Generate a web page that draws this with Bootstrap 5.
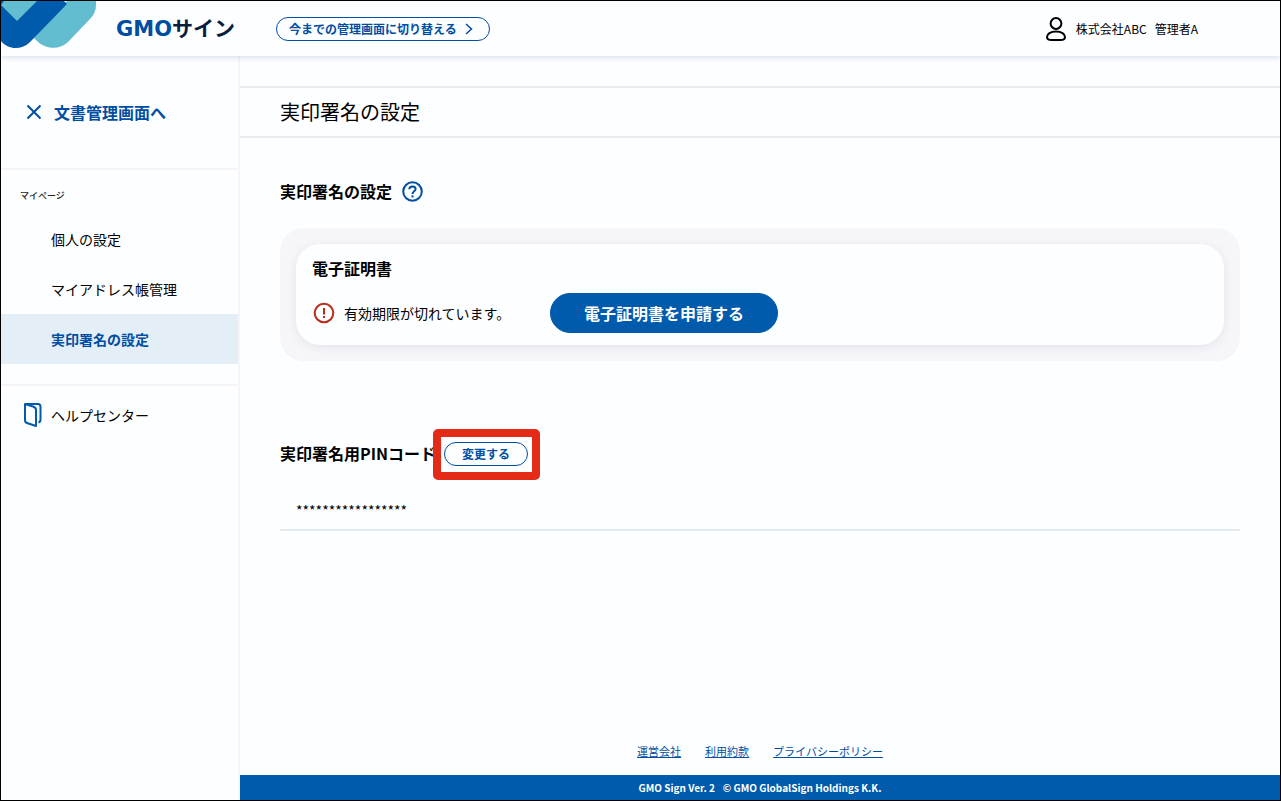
<!DOCTYPE html>
<html lang="ja">
<head>
<meta charset="utf-8">
<meta name="viewport" content="width=device-width, initial-scale=1">
<title>実印署名の設定</title>
<link href="https://cdn.jsdelivr.net/npm/bootstrap@5.3.0/dist/css/bootstrap.min.css" rel="stylesheet">
<style>
:root { --brand: #005bac; --link: #004ea2; --line: #ebebef; --line-soft: #f5f5f8; }
body { font-family: "Noto Sans CJK JP", sans-serif; font-size: 14px; line-height: 20px; color: #000; background: #fdfeff; border: 1px solid #000; }
a { color: var(--link); }
.topbar { height: 55px; background: #fdfeff; box-shadow: 0 1px 6px rgba(0, 60, 120, .18); z-index: 2; }
.brand-mark { width: 96px; height: 48px; }
.brand-name { margin-left: 19px; width: 122px; font-size: 21px; line-height: 24px; font-weight: 700; font-family: "DejaVu Sans", "Noto Sans CJK JP", sans-serif; color: #0b1c3f; }
.brand-name b { color: var(--link); }
.btn-line { --bs-btn-color: var(--link); --bs-btn-border-color: var(--link); --bs-btn-bg: #fdfeff; --bs-btn-hover-color: #fff; --bs-btn-hover-bg: var(--brand); --bs-btn-font-weight: 700; height: 24px; font-size: 12px; line-height: 20px; }
.btn-switch { margin-left: 38px; padding: 0 16px 0 12px; }
.user-box { font-size: 12px; margin-right: 82px; gap: 8px; }
.side { width: 239px; flex: none; border-right: 2px solid var(--line-soft); }
.side-block { border-bottom: 2px solid var(--line-soft); }
.side-back { height: 114px; padding-left: 25px; font-size: 16px; font-weight: 700; }
.side-menu { padding-bottom: 20px; }
.side-label { font-size: 9px; padding: 16px 19px 8px; color: #222; font-weight: 500; }
.side-item { display: flex; align-items: center; height: 50px; padding-left: 50px; color: #000; text-decoration: none; }
.side-item.current { background: #e4eef7; color: var(--link); font-weight: 700; }
.side-help { padding-left: 22px; height: 58px; }
.page-title { margin-top: 30px; border-top: 2px solid var(--line); border-bottom: 2px solid var(--line); height: 52px; padding-left: 40px; font-size: 20px; line-height: 28px; font-weight: 400; }
.content-pad { padding: 0 40px; }
.section-head { padding: 41px 0 25px; gap: 10px; }
.sub-title { font-size: 16px; line-height: 24px; font-weight: 700; }
.panel { background: #f6f6f9; border-radius: 24px; padding: 16px; }
.panel-inner { background: #fdfeff; border-radius: 24px; padding: 12px 16px; box-shadow: 0 2px 8px rgba(60, 60, 120, .1); }
.card-head { margin-bottom: 13px; }
.status { width: 238px; }
.btn-apply { --bs-btn-color: #fff; --bs-btn-bg: var(--brand); --bs-btn-border-color: var(--brand); --bs-btn-hover-color: #fff; --bs-btn-hover-bg: #004a90; width: 228px; height: 40px; font-size: 16px; font-weight: 700; line-height: 24px; }
.pin-area { margin-top: 68px; }
.callout-frame { border: 8px solid #e32b18; border-radius: 5px; padding: 5px 4px 6px 3px; background: #fdfeff; margin-left: -3px; }
.btn-change { width: 84px; padding: 0; }
.pin-value { border-bottom: 2px solid #e0ebf5; padding: 20px 16px 9px; }
.foot-links { font-size: 11px; gap: 24px; margin-bottom: 14px; }
.foot-bar { background: var(--brand); color: #fff; font-size: 10px; font-weight: 700; height: 25px; gap: 8px; }
</style>
</head>
<body class="d-flex flex-column min-vh-100">
<header class="topbar d-flex align-items-center position-relative">
  <svg class="brand-mark align-self-start" viewBox="1 1 96 48" aria-hidden="true">
    <path d="M67 1H96V5Q96 13 90 19L68 42C60 50 45 50 36 40L34 38Z" fill="#62bdd0"/>
    <path d="M1 1H64L67 4L34 38L29 43C21 50 8 50 1 41Z" fill="#005bac"/>
    <path d="M1 5L4 1H34L37 1L17 21Z" fill="#62bdd0"/>
  </svg>
  <span class="brand-name text-nowrap"><b>GMO</b>サイン</span>
  <button type="button" class="btn btn-line btn-switch rounded-pill d-flex align-items-center gap-2 text-nowrap">今までの管理画面に切り替える
    <svg width="8" height="12" viewBox="0 0 8 12" fill="none" stroke="currentColor" stroke-width="1.5" aria-hidden="true"><path d="M1 1L6.5 6L1 11"/></svg>
  </button>
  <div class="user-box d-flex align-items-center ms-auto text-nowrap">
    <svg width="22" height="24" viewBox="0 0 22 24" fill="none" stroke="#000" stroke-width="2" aria-hidden="true"><circle cx="10" cy="6.5" r="5.4"/><path d="M10 14.5C4.500 14.500 1 17 1 20C1 22.300 3 23 5.500 23H14.500C17 23 19 22.300 19 20C19 17 15.500 14.500 10 14.500Z"/></svg>
    <span>株式会社ABC</span><span>管理者A</span>
  </div>
</header>
<div class="d-flex flex-grow-1">
  <nav class="side">
    <div class="side-block side-back d-flex align-items-center">
      <a href="#" class="text-decoration-none d-flex align-items-center">
        <svg class="me-2" width="16" height="16" viewBox="0 0 16 16" stroke="currentColor" stroke-width="2" aria-hidden="true"><path d="M1.500 1.500L14.500 14.500M14.500 1.500L1.500 14.500"/></svg>
        <span class="ms-1">文書管理画面へ</span></a>
    </div>
    <div class="side-block side-menu">
      <div class="side-label">マイページ</div>
      <a href="#" class="side-item">個人の設定</a>
      <a href="#" class="side-item">マイアドレス帳管理</a>
      <a href="#" class="side-item current" aria-current="page">実印署名の設定</a>
    </div>
    <a href="#" class="side-item side-help">
      <svg class="me-2" width="20" height="26" viewBox="0 0 20 26" fill="none" stroke="#005bac" stroke-width="2" stroke-linejoin="round" aria-hidden="true"><path d="M2 2L10 4.500Q13 5.500 13 8V24L4 21Q2 20.500 2 18Z"/><path d="M2 2H15Q17.500 2 17.500 5V17.500Q17.500 20 15.500 20.500" stroke-width="2"/></svg>
      ヘルプセンター</a>
  </nav>
  <main class="flex-grow-1 d-flex flex-column">
    <h1 class="page-title d-flex align-items-center mb-0">実印署名の設定</h1>
    <div class="content-pad flex-grow-1">
      <div class="d-flex align-items-center section-head">
        <h2 class="sub-title mb-0">実印署名の設定</h2>
        <svg width="21" height="21" viewBox="0 0 21 21" fill="none" stroke="#004ea2" stroke-width="2" role="img" aria-label="ヘルプ"><circle cx="10.500" cy="10.500" r="9.300"/><path d="M7.300 8.300C7.300 6.500 8.600 5.400 10.500 5.400C12.300 5.400 13.600 6.500 13.600 8.100C13.600 10.300 10.500 10.400 10.500 13"/><path d="M10.500 14.300V16.400"/></svg>
      </div>
      <section class="panel">
        <div class="panel-inner">
          <h3 class="sub-title card-head">電子証明書</h3>
          <div class="d-flex align-items-center">
            <div class="status d-flex align-items-center text-nowrap">
              <svg class="me-2" width="24" height="24" viewBox="0 0 24 24" fill="none" stroke="#b92b1b" stroke-width="2" aria-hidden="true"><circle cx="12" cy="12" r="9.300"/><path d="M12 7V13.500M12 15V17"/></svg>
              有効期限が切れています。
            </div>
            <button type="button" class="btn btn-apply rounded-pill p-0">電子証明書を申請する</button>
          </div>
        </div>
      </section>
      <section class="pin-area">
        <div class="d-flex align-items-center">
          <h2 class="sub-title mb-1 text-nowrap">実印署名用PINコード</h2>
          <div class="callout-frame"><button type="button" class="btn btn-line btn-change rounded-pill d-block">変更する</button></div>
        </div>
        <div class="pin-value">*****************</div>
      </section>
    </div>
    <footer>
      <div class="foot-links d-flex justify-content-center">
        <a href="#">運営会社</a><a href="#">利用約款</a><a href="#">プライバシーポリシー</a>
      </div>
      <div class="foot-bar d-flex align-items-center justify-content-center"><span>GMO Sign Ver. 2</span><span>© GMO GlobalSign Holdings K.K.</span></div>
    </footer>
  </main>
</div>
<script src="https://cdn.jsdelivr.net/npm/bootstrap@5.3.0/dist/js/bootstrap.bundle.min.js"></script>
</body>
</html>
